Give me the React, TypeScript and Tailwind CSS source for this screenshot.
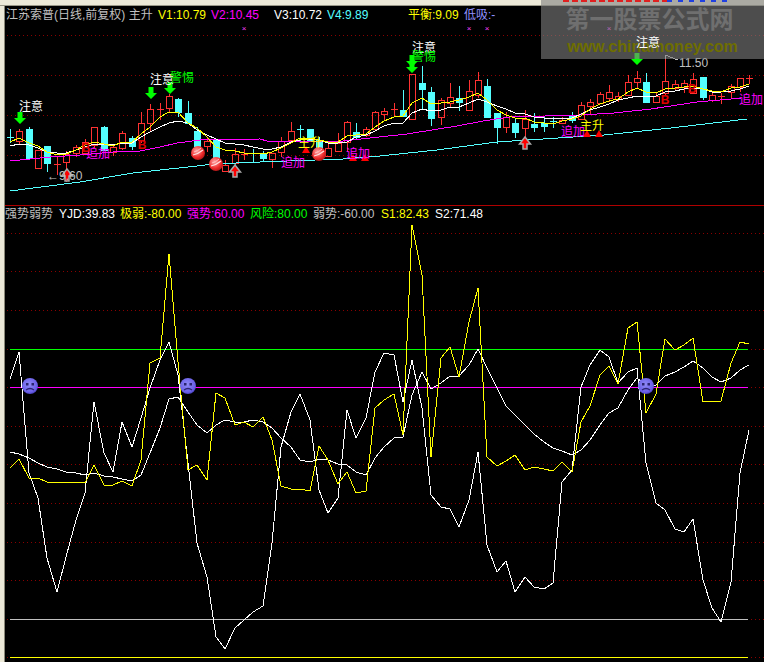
const RED = "#ff3232";
const CYAN = "#54ffff";
const GRID = "#8a0000";

const xAt = (i: number) => Math.round(10 + 9.36 * i);

// kind, high, low, body top, body bottom (page pixels)
const CANDLES: [string, number, number, number, number][] = [
  ["c", 129, 143, 137, 137], ["r", 129, 145, 131, 141], ["c", 127, 158, 129, 158], ["r", 150, 168, 150, 168],
  ["c", 146, 172, 146, 163], ["r", 157, 175, 164, 164], ["r", 151, 182, 154, 162], ["r", 145, 157, 147, 153],
  ["r", 139, 155, 142, 153], ["r", 127, 148, 127, 145], ["c", 126, 150, 127, 150], ["r", 145, 156, 147, 152],
  ["r", 131, 150, 133, 148], ["c", 136, 150, 138, 146], ["r", 112, 143, 123, 140], ["r", 104, 132, 109, 123],
  ["r", 103, 120, 109, 109], ["r", 94, 113, 96, 108], ["c", 98, 117, 99, 112], ["c", 101, 124, 113, 123],
  ["c", 127, 146, 131, 146], ["r", 138, 152, 141, 146], ["c", 140, 158, 140, 158], ["r", 160, 171, 165, 171],
  ["r", 148, 165, 154, 163], ["r", 149, 160, 154, 154], ["c", 149, 162, 153, 153], ["c", 151, 162, 153, 158],
  ["r", 153, 168, 153, 159], ["r", 137, 157, 141, 152], ["r", 122, 143, 131, 140], ["c", 125, 143, 129, 129],
  ["c", 129, 140, 129, 140], ["c", 137, 148, 140, 148], ["r", 143, 156, 148, 156], ["r", 133, 151, 143, 151],
  ["r", 121, 152, 122, 142], ["c", 123, 140, 132, 137], ["r", 127, 137, 129, 135], ["r", 111, 130, 112, 129],
  ["r", 108, 120, 111, 114], ["r", 103, 116, 109, 109], ["c", 90, 116, 110, 116], ["r", 74, 120, 74, 119],
  ["c", 66, 110, 83, 89], ["c", 87, 126, 92, 118], ["r", 98, 125, 100, 117], ["r", 83, 108, 97, 103],
  ["c", 86, 111, 98, 102], ["r", 80, 110, 91, 110], ["r", 72, 98, 80, 95], ["c", 79, 117, 86, 117],
  ["c", 113, 144, 113, 127], ["r", 112, 133, 117, 127], ["c", 118, 138, 123, 132], ["r", 110, 138, 119, 128],
  ["c", 113, 132, 124, 127], ["c", 117, 132, 123, 126], ["c", 117, 128, 121, 121], ["r", 117, 123, 120, 123],
  ["c", 112, 123, 116, 120], ["r", 102, 120, 105, 119], ["r", 99, 115, 102, 106], ["r", 92, 103, 94, 103],
  ["r", 85, 102, 92, 98], ["r", 92, 102, 96, 99], ["r", 75, 96, 82, 95], ["r", 71, 89, 78, 82],
  ["c", 73, 103, 82, 102], ["r", 93, 102, 96, 102], ["r", 57, 95, 81, 93], ["r", 80, 91, 84, 88],
  ["r", 80, 93, 83, 87], ["r", 73, 94, 79, 93], ["c", 77, 100, 77, 97], ["r", 92, 102, 95, 100],
  ["r", 93, 104, 96, 96], ["r", 84, 98, 86, 92], ["r", 78, 92, 78, 87], ["r", 75, 84, 78, 78],
];

const MA_WHITE = [
  146, 144, 145, 148, 152, 153, 153, 150, 147, 144, 144, 145, 143, 143, 137, 132, 127, 123, 121, 123, 130, 135, 139, 143, 144, 145, 147,
  149, 149, 147, 142, 140, 139, 140, 143, 143, 142, 137, 135, 131, 126, 123, 123, 113, 109, 111, 110, 107, 107, 103, 99, 102, 106, 109,
  113, 114, 117, 118, 119, 118, 118, 114, 110, 107, 104, 100, 98, 96, 97, 96, 92, 91, 89, 88, 89, 92, 92, 91, 89, 86,
];
const MA_YELLOW = [
  142, 138, 143, 146, 152, 155, 154, 150, 145, 142, 144, 146, 142, 142, 134, 127, 117, 112, 112, 123, 128, 137, 147, 150, 151, 153, 153,
  154, 152, 148, 143, 138, 138, 140, 142, 142, 136, 135, 134, 127, 121, 117, 116, 103, 98, 104, 103, 102, 100, 97, 93, 100, 110, 115,
  118, 118, 122, 123, 124, 121, 119, 116, 109, 104, 101, 99, 92, 88, 92, 93, 89, 88, 87, 86, 89, 91, 92, 88, 87, 84,
];
const MA_MAGENTA = "10,161 50,157 80,155 113,152 140,151 160,147 177,143 200,140 260,139 267,141 343,141 370,138 407,134 457,126 483,121 510,117 581,115 614,113 651,109 697,102 731,99 741,98";
const MA_CYAN = "10,191 80,182 133,173 197,166 213,164 260,162 343,159 380,156 437,150 497,142 604,135 671,128 747,119";

const JAGGED = [
  379, 352, 473, 498, 558, 592, 557, 520, 493, 402, 453, 472, 422, 447, 418, 388, 360, 342, 375, 463,
  543, 577, 637, 649, 628, 620, 612, 606, 543, 447, 412, 394, 420, 490, 513, 498, 410, 438, 418, 372,
  353, 355, 402, 360, 408, 495, 507, 509, 527, 500, 452, 545, 572, 561, 592, 577, 587, 589, 583, 482,
  470, 387, 365, 350, 357, 383, 372, 368, 463, 503, 510, 529, 532, 519, 580, 608, 622, 582, 473, 430,
];
const SMOOTH = [
  452, 454, 458, 463, 467, 469, 472, 473, 475, 473, 476, 477, 479, 481, 475, 453, 428, 399, 397, 412,
  425, 433, 425, 420, 422, 422, 420, 422, 428, 438, 447, 460, 462, 459, 460, 464, 465, 472, 475, 458,
  447, 438, 437, 395, 372, 389, 383, 376, 376, 365, 349, 368, 388, 406, 415, 425, 434, 442, 448, 451,
  455, 450, 440, 425, 413, 408, 390, 378, 385, 385, 376, 372, 367, 361, 368, 377, 382, 378, 370, 365,
];
const YELLOW = [
  468, 459, 478, 478, 482, 482, 482, 482, 483, 465, 485, 485, 481, 486, 460, 363, 358, 254, 362, 470,
  465, 480, 393, 398, 425, 422, 427, 417, 440, 486, 489, 489, 491, 446, 460, 484, 472, 493, 491, 408,
  400, 394, 435, 225, 275, 457, 358, 347, 377, 322, 288, 457, 466, 461, 455, 470, 467, 469, 471, 462,
  472, 422, 406, 375, 366, 384, 328, 322, 413, 394, 339, 350, 345, 338, 402, 401, 401, 363, 342, 344,
];

const toPoints = (ys: number[]) => ys.map((y, i) => `${xAt(i)},${y}`).join(" ");

function Candle({ i, data }: { i: number; data: [string, number, number, number, number] }) {
  const [kind, high, low, top, bot] = data;
  const x = xAt(i) + 0.5;
  const color = kind === "r" ? RED : CYAN;
  if (top === bot) {
    return (
      <g stroke={color}>
        <line x1={x} x2={x} y1={high} y2={low} />
        <line x1={x - 3.5} x2={x + 3.5} y1={top + 0.5} y2={top + 0.5} />
      </g>
    );
  }
  if (kind === "c") {
    return (
      <g stroke={color} fill={color}>
        <line x1={x} x2={x} y1={high} y2={low} />
        <rect x={x - 3} y={top + 0.5} width={6} height={bot - top} />
      </g>
    );
  }
  return (
    <g stroke={color} fill="none">
      <line x1={x} x2={x} y1={high} y2={top} />
      <line x1={x} x2={x} y1={bot} y2={low} />
      <rect x={x - 3} y={top + 0.5} width={6} height={bot - top} />
    </g>
  );
}

function DownArrow({ x, y }: { x: number; y: number }) {
  return (
    <polygon
      fill="#00ff00"
      points={`${x - 2.5},${y - 6} ${x + 2.5},${y - 6} ${x + 2.5},${y} ${x + 6},${y} ${x},${y + 6} ${x - 6},${y} ${x - 2.5},${y}`}
    />
  );
}

function UpArrow({ x, y }: { x: number; y: number }) {
  return (
    <polygon
      fill="#ff0000"
      stroke="#a8a8a8"
      strokeWidth={1.5}
      points={`${x},${y - 7} ${x + 5.5},${y} ${x + 2},${y} ${x + 2},${y + 5} ${x - 2},${y + 5} ${x - 2},${y} ${x - 5.5},${y}`}
    />
  );
}

function Ball({ x, y }: { x: number; y: number }) {
  return (
    <g>
      <circle cx={x} cy={y} r={7} fill="url(#ball)" />
      <path d={`M${x - 5},${y + 2} Q${x},${y + 1} ${x + 5},${y - 3}`} fill="none" stroke="#ffe0e0" strokeWidth={1.2} />
      <path d={`M${x - 4},${y - 1} Q${x},${y - 2} ${x + 3},${y - 5}`} fill="none" stroke="#ffc0c0" />
    </g>
  );
}

function Face({ x, y }: { x: number; y: number }) {
  return (
    <g>
      <circle cx={x} cy={y} r={8} fill="url(#face)" />
      <rect x={x - 4} y={y - 3} width={2.5} height={2.5} fill="#2b2470" />
      <rect x={x + 1.5} y={y - 3} width={2.5} height={2.5} fill="#2b2470" />
      <path d={`M${x - 4},${y + 4} Q${x},${y + 1} ${x + 4},${y + 4}`} fill="none" stroke="#2b2470" strokeWidth={1.3} />
    </g>
  );
}

function Label({ x, y, color, children, bold }: { x: number; y: number; color: string; children: string; bold?: boolean }) {
  return (
    <text x={x} y={y + 5} fill={color} fontSize={12} fontWeight={bold ? 700 : 400} textAnchor="middle">
      {children}
    </text>
  );
}

function GridLines({ rows }: { rows: number[] }) {
  return (
    <g stroke={GRID} strokeDasharray="1 3">
      {rows.map((y) => (
        <line key={y} x1={7} x2={764} y1={y + 0.5} y2={y + 0.5} />
      ))}
    </g>
  );
}

function PriceChart() {
  return (
    <svg viewBox="5 24 759 181" width={759} height={181} className="block">
      <defs>
        <radialGradient id="ball" cx="0.4" cy="0.35" r="0.7">
          <stop offset="0" stopColor="#ffa8a8" />
          <stop offset="0.65" stopColor="#ee2a2a" />
          <stop offset="1" stopColor="#a81414" />
        </radialGradient>
      </defs>
      <g shapeRendering="crispEdges">
        <GridLines rows={[35, 75, 115, 155]} />
        {CANDLES.map((c, i) => (
          <Candle key={i} i={i} data={c} />
        ))}
        <polyline points={MA_MAGENTA} fill="none" stroke="#ff00ff" />
        <polyline points={MA_CYAN} fill="none" stroke={CYAN} />
        <polyline points={toPoints(MA_WHITE)} fill="none" stroke="#ffffff" />
        <polyline points={toPoints(MA_YELLOW)} fill="none" stroke="#ffff00" />
      </g>

      {[306, 353, 365, 587, 599].map((x, i) => {
        const y = i === 0 ? 150 : i < 3 ? 158 : 134;
        return <polygon key={x} fill="#ff0000" points={`${x},${y - 4} ${x + 4},${y + 3} ${x - 4},${y + 3}`} />;
      })}
      <DownArrow x={20} y={118} />
      <DownArrow x={151} y={93} />
      <DownArrow x={170} y={88} />
      <DownArrow x={412} y={61} />
      <DownArrow x={412} y={67} />
      <DownArrow x={637} y={59} />
      <UpArrow x={67} y={176} />
      <UpArrow x={235} y={172} />
      <UpArrow x={525} y={144} />
      <Ball x={198} y={153} />
      <Ball x={216} y={164} />
      <Ball x={319} y={154} />

      {[244, 469, 487, 609].map((x) => (
        <text key={x} x={x} y={31} fill="#ff40ff" fontSize={8} textAnchor="middle">
          ×
        </text>
      ))}

      <Label x={31} y={106} color="#ffffff">注意</Label>
      <Label x={162} y={79} color="#ffffff">注意</Label>
      <Label x={424} y={47} color="#ffffff">注意</Label>
      <Label x={182} y={77} color="#00ff00">警惕</Label>
      <Label x={424} y={56} color="#00ff00">警惕</Label>
      <Label x={98} y={153} color="#ff00ff">追加</Label>
      <Label x={293} y={162} color="#ff00ff">追加</Label>
      <Label x={358} y={153} color="#ff00ff">追加</Label>
      <Label x={573} y={131} color="#ff00ff">追加</Label>
      <Label x={751} y={99} color="#ff00ff">追加</Label>
      <Label x={310} y={142} color="#ffff00">主升</Label>
      <Label x={592} y={125} color="#ffff00">主升</Label>
      <Label x={86} y={147} color="#e00000" bold>B</Label>
      <Label x={142} y={144} color="#e00000" bold>B</Label>
      <Label x={665} y={99} color="#e00000" bold>B</Label>
      <Label x={692} y={88} color="#e00000" bold>B</Label>
      <text x={47} y={180} fill="#c0c0c0" fontSize={12}>←9.60</text>
      <path d="M665,59 L665,55 L668,55 M665,55 L678,60" fill="none" stroke="#c0c0c0" shapeRendering="crispEdges" />
      <text x={679} y={67} fill="#c0c0c0" fontSize={12}>11.50</text>
    </svg>
  );
}

function StrengthChart() {
  return (
    <svg viewBox="5 222 759 440" width={759} height={440} className="block">
      <defs>
        <radialGradient id="face" cx="0.45" cy="0.4" r="0.65">
          <stop offset="0" stopColor="#8f8af5" />
          <stop offset="0.75" stopColor="#6a5fe8" />
          <stop offset="1" stopColor="#3d35b0" />
        </radialGradient>
      </defs>
      <g shapeRendering="crispEdges">
        <GridLines rows={[233, 271, 310, 349, 387, 426, 464, 503, 542, 580, 619, 657]} />
        <line x1={10} x2={748} y1={349.5} y2={349.5} stroke="#00ff00" />
        <line x1={10} x2={748} y1={387.5} y2={387.5} stroke="#ff00ff" />
        <line x1={10} x2={748} y1={619.5} y2={619.5} stroke="#c0c0c0" />
        <line x1={10} x2={748} y1={657.5} y2={657.5} stroke="#ffff00" />
        <polyline points={toPoints(JAGGED)} fill="none" stroke="#ffffff" />
        <polyline points={toPoints(SMOOTH)} fill="none" stroke="#ffffff" />
        <polyline points={toPoints(YELLOW)} fill="none" stroke="#ffff00" />
      </g>
      <Face x={30} y={386} />
      <Face x={188} y={386} />
      <Face x={646} y={386} />
    </svg>
  );
}

export default function App() {
  return (
    <div className="relative flex h-[662px] w-[764px] flex-col overflow-hidden bg-black font-['Liberation_Sans','Noto_Sans_CJK_SC',sans-serif] text-xs">
      <div className="h-[6px] shrink-0 border-b border-[#9a9888] bg-[#ece9d8]" />
      <div className="flex min-h-0 flex-1">
        <div className="w-[5px] shrink-0 border-r border-[#8a8878] bg-[#ece9d8]" />
        <div className="flex min-w-0 flex-1 flex-col">
          <section className="h-[199px] shrink-0">
            <div className="flex h-[18px] items-center pl-px leading-[18px] whitespace-nowrap">
              <span className="w-[152px] text-[#c0c0c0]">江苏索普(日线,前复权) 主升</span>
              <span className="w-[53px] text-[#ffff00]">V1:10.79</span>
              <span className="w-[63px] text-[#ff00ff]">V2:10.45</span>
              <span className="w-[53px] text-white">V3:10.72</span>
              <span className="w-[81px] text-[#54ffff]">V4:9.89</span>
              <span className="w-[56px] text-[#ffff00]">平衡:9.09</span>
              <span className="text-[#9090ff]">低吸:-</span>
            </div>
            <PriceChart />
          </section>
          <section className="flex min-h-0 flex-1 flex-col border-t border-[#b00000]">
            <div className="flex h-[16px] items-center leading-4 whitespace-nowrap">
              <span className="w-[54px] text-[#c0c0c0]">强势弱势</span>
              <span className="w-[61px] text-white">YJD:39.83</span>
              <span className="w-[67px] text-[#ffff00]">极弱:-80.00</span>
              <span className="w-[63px] text-[#ff00ff]">强势:60.00</span>
              <span className="w-[63px] text-[#00ff00]">风险:80.00</span>
              <span className="w-[68px] text-[#c0c0c0]">弱势:-60.00</span>
              <span className="w-[54px] text-[#ffff00]">S1:82.43</span>
              <span className="text-white">S2:71.48</span>
            </div>
            <StrengthChart />
          </section>
        </div>
      </div>

      <div className="absolute top-0 left-[541px] flex h-[59px] w-[223px] flex-col items-center bg-[#808080]/60">
        <svg width={223} height={3} className="absolute top-0 left-0">
          <line x1={22} x2={126} y1={1} y2={1} stroke="#e02020" strokeWidth={2} strokeDasharray="6 3" />
          <line x1={126} x2={190} y1={1} y2={1} stroke="#2040e0" strokeWidth={2} strokeDasharray="5 6" />
        </svg>
        <div className="mt-[5px] mr-[6px] text-2xl leading-[30px] font-bold text-[#6f6f6f]">第一股票公式网</div>
        <div className="mt-[2px] text-base leading-5 font-bold text-[#6e6e00]">www.chinamoney.com</div>
        <span className="absolute top-[36px] left-[95px] leading-[14px] text-white">注意</span>
      </div>
    </div>
  );
}
